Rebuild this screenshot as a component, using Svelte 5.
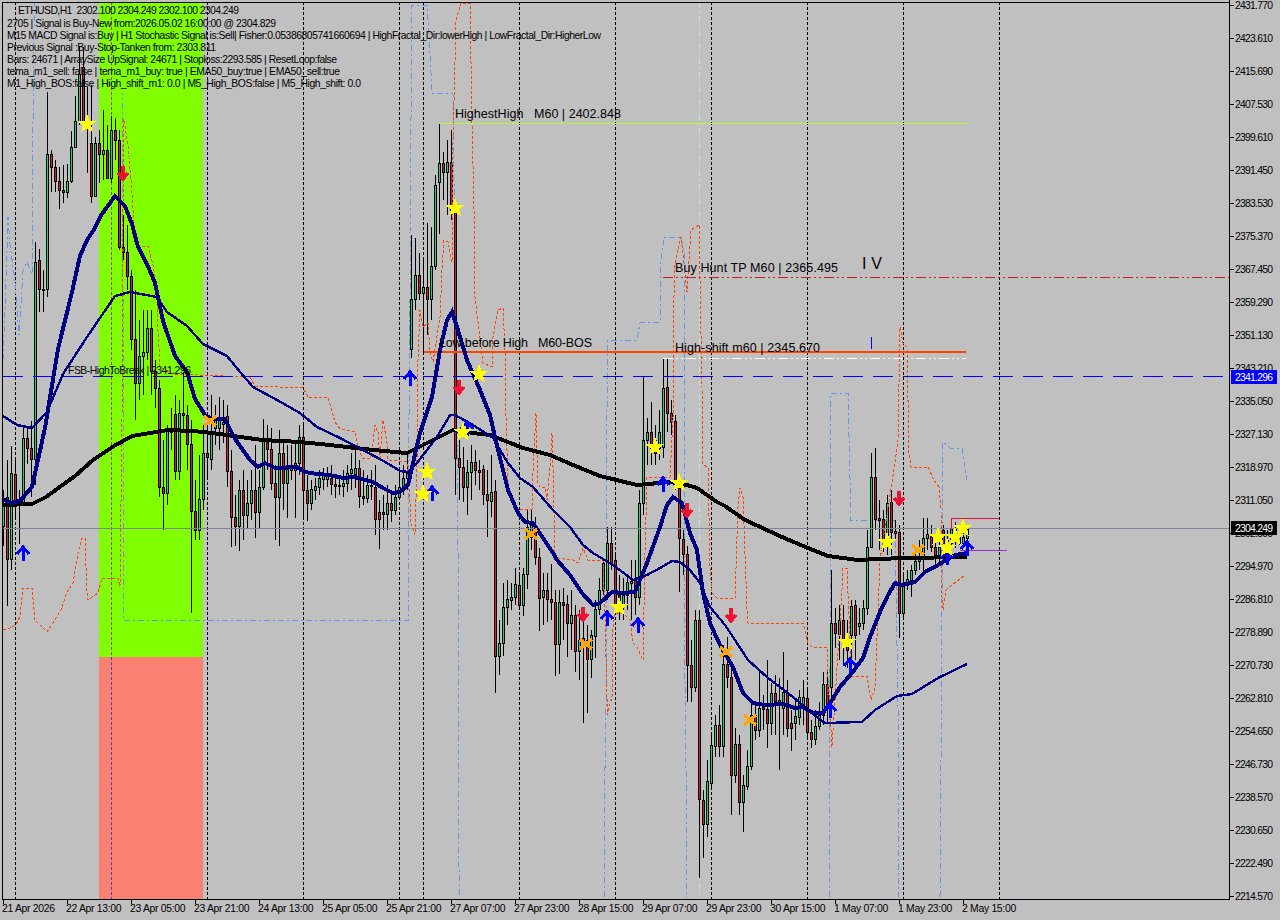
<script lang="ts">
  // ETHUSD H1 chart. All values below are chart pixels, read off the terminal window.
  const W = 1280, H = 920, axisX = 1229, axisY = 899;

  // [bodyTop, bodyBottom, high, low, up]; bar i sits at x = 3 + 4 * i
  const bars: number[][] = [
    [503,526,490,546,1],[497,559,460,606,0],[473,559,446,570,1],[474,505,460,520,0],[503,505,490,544,1],[438,503,428,503,1],
    [438,448,428,464,0],[448,459,421,497,0],[262,459,242,485,1],[260,289,249,312,0],[289,290,270,312,0],[154,289,92,297,1],
    [154,167,150,192,0],[167,181,160,192,0],[181,190,167,209,0],[190,192,165,203,0],[181,192,164,198,1],[147,181,131,183,1],
    [121,147,96,147,1],[74,121,47,125,1],[67,121,47,130,0],[122,126,87,173,0],[143,196,85,203,0],[143,196,137,196,1],
    [143,154,130,183,0],[150,154,110,180,1],[150,178,125,178,0],[130,178,116,183,1],[130,140,118,160,0],[140,247,130,250,0],
    [247,252,215,260,0],[252,276,225,290,0],[276,339,270,350,0],[339,383,290,420,0],[356,383,320,400,1],[352,356,310,395,1],
    [328,352,310,360,1],[328,371,310,395,0],[371,388,360,408,0],[388,487,380,497,0],[487,493,440,530,0],[431,493,425,505,1],
    [430,432,408,450,1],[414,471,395,480,0],[413,471,400,480,1],[413,415,372,430,0],[415,444,405,470,0],[444,511,420,613,0],
    [511,530,480,540,0],[499,530,455,540,1],[453,499,425,510,1],[453,457,420,480,0],[431,459,395,470,1],[420,428,405,445,1],
    [420,428,397,450,1],[422,424,400,443,1],[416,471,405,487,0],[471,517,450,547,0],[517,526,495,546,0],[490,526,480,551,1],
    [490,515,470,540,0],[503,515,480,528,1],[490,503,470,520,1],[490,512,445,538,0],[487,512,470,528,1],[440,487,419,490,1],
    [442,449,425,470,0],[449,483,428,490,0],[483,497,465,540,0],[453,497,430,546,1],[453,483,440,510,0],[469,483,445,518,1],
    [468,470,445,480,1],[463,470,440,518,1],[437,463,425,475,1],[437,490,425,519,0],[490,503,475,521,0],[489,503,480,510,1],
    [486,490,478,500,1],[478,487,470,495,1],[475,479,468,490,1],[475,479,467,487,1],[478,484,465,495,0],[484,486,478,498,0],
    [485,486,478,495,0],[483,486,470,497,1],[473,483,465,492,1],[469,473,453,490,1],[468,474,450,488,1],[468,496,460,508,0],
    [496,498,470,505,0],[485,498,475,503,1],[485,486,470,500,0],[487,519,465,535,0],[512,519,500,549,0],[512,514,495,530,0],
    [503,514,485,530,1],[503,510,490,522,0],[497,510,485,515,1],[487,497,472,498,1],[478,488,465,495,1],[473,478,455,490,1],
    [299,349,235,358,1],[275,299,238,310,1],[275,293,253,300,0],[287,293,260,352,1],[287,299,223,335,0],[266,299,227,320,1],
    [185,266,175,270,1],[163,182,124,234,1],[163,172,152,200,0],[162,172,140,215,1],[162,210,130,220,0],[210,458,205,495,0],
    [458,467,440,500,0],[467,487,447,502,0],[472,487,460,515,1],[462,472,445,500,1],[462,470,450,485,0],[470,472,460,490,0],
    [469,494,465,505,0],[494,500,470,537,0],[492,501,455,517,1],[491,656,480,693,0],[643,656,620,675,1],[607,643,583,656,1],
    [599,607,580,625,1],[597,600,583,610,1],[584,597,568,605,1],[585,605,575,610,0],[574,605,568,616,1],[527,574,510,589,1],
    [525,537,510,550,1],[525,557,517,565,0],[557,598,548,631,0],[590,597,573,625,1],[590,599,573,622,0],[599,602,564,620,0],
    [602,644,590,676,0],[602,644,590,674,1],[602,605,588,640,0],[604,623,595,657,0],[615,623,590,650,1],[615,651,605,672,0],
    [640,651,610,680,1],[638,642,610,723,0],[640,659,625,713,0],[635,659,630,678,1],[609,636,600,658,1],[590,609,578,615,1],
    [563,590,558,595,1],[543,590,527,600,1],[543,563,527,570,0],[560,607,555,615,0],[595,605,575,620,0],[595,604,578,620,1],
    [582,595,575,610,1],[581,583,560,620,1],[580,597,560,615,0],[503,597,490,605,1],[440,503,377,515,1],[432,440,418,465,1],
    [432,448,402,465,0],[440,453,425,465,0],[432,448,410,460,1],[388,447,358,458,1],[387,413,358,432,0],[413,422,400,435,0],
    [421,482,415,490,0],[488,538,475,592,0],[539,554,530,575,0],[554,665,546,702,0],[665,687,640,702,0],[620,687,610,692,1],
    [620,799,610,878,0],[800,824,790,858,0],[781,824,760,837,1],[745,783,732,790,1],[725,746,715,757,1],[725,746,705,757,0],
    [664,746,645,757,1],[664,677,637,688,0],[677,775,666,815,0],[744,775,728,783,1],[744,802,735,815,0],[785,802,775,832,1],
    [766,786,750,790,1],[715,766,700,770,1],[715,730,705,740,0],[708,730,670,737,1],[707,709,695,730,0],[709,723,660,748,0],
    [693,723,683,735,1],[693,701,675,735,0],[700,703,678,770,0],[692,708,652,735,1],[692,728,680,737,0],[723,728,710,751,0],
    [716,723,700,740,1],[697,717,690,725,1],[697,707,680,725,1],[698,732,690,740,0],[732,739,720,748,0],[726,739,710,745,1],
    [715,726,702,730,1],[684,715,672,725,1],[684,707,670,722,0],[623,687,570,717,1],[623,633,608,648,0],[620,634,605,660,1],
    [620,640,605,665,0],[638,650,620,668,0],[606,635,600,672,1],[605,635,600,660,0],[623,626,608,635,1],[608,623,600,630,1],
    [547,608,530,615,1],[477,547,453,548,1],[477,519,448,530,0],[518,520,500,550,0],[519,540,510,552,0],[503,540,495,555,1],
    [502,532,490,555,0],[531,533,520,540,0],[532,613,525,638,0],[583,613,575,617,1],[579,583,570,590,1],[570,580,565,597,1],
    [561,570,550,575,1],[557,561,540,570,1],[538,557,518,572,1],[534,538,518,550,1],[535,547,525,552,0],[547,555,540,565,0],
    [547,555,538,562,1],[530,543,525,556,0],[540,550,530,556,1],[529,543,518,545,1],[528,540,522,548,0],[537,543,525,545,1],
    [537,543,526,548,1],[529,538,525,540,1]
  ];

  const fastLine = "3,499 10,503 20,501 32,487 45,428 58,349 72,292 80,256 87,240 93,231 102,214 115,196 125,206 132,224 138,247 147,264 155,283 163,321 175,356 187,372 195,399 205,415 213,419 225,419 235,439 250,460 258,467 265,463 275,468 297,467 305,472 317,474 330,475 343,478 355,477 365,480 373,482 383,488 393,493 400,492 408,485 413,463 420,433 432,397 440,350 447,320 452,312 457,327 467,360 480,390 490,415 498,450 508,490 518,513 525,522 533,523 543,538 553,553 557,560 570,575 582,593 593,605 600,603 612,592 623,593 635,592 647,563 660,527 667,505 673,497 682,503 690,533 697,550 703,593 710,623 720,645 733,667 743,693 753,703 765,705 783,704 795,708 803,707 813,713 823,713 832,700 840,687 852,673 863,658 870,637 880,612 888,595 895,583 902,585 915,582 925,572 938,565 955,555 967,553";
  const midLine = "3,416 17,425 32,428 47,412 63,374 87,337 115,296 130,292 157,297 167,312 187,326 203,344 227,356 240,372 253,387 277,400 300,413 317,427 340,438 363,450 387,463 400,471 408,472 417,463 437,437 450,415 455,415 473,425 493,438 508,463 520,478 533,487 553,510 570,527 583,545 593,553 613,565 633,580 647,575 660,568 672,561 680,562 690,570 700,583 710,607 725,625 735,640 748,660 768,678 788,693 805,707 818,718 825,723 862,722 875,710 897,696 912,694 938,678 967,664";
  const slowLine = "3,505 32,504 46,497 75,476 93,460 114,446 132,436 168,430 193,431 221,434 240,437 263,440 300,442 330,445 373,450 407,453 417,448 433,440 453,430 473,433 490,435 523,448 550,455 573,465 600,476 637,485 670,482 687,485 697,488 717,502 725,506 745,520 782,537 808,548 828,556 858,560 902,558 967,557";
  const orangeBand = "3,629 8,629 16,625 18,620 20,617 23,588 32,588 35,620 47,632 55,620 61,610 67,592 73,583 78,553 82,538 85,538 87,593 88,600 98,593 102,578 118,578 120,587 122,417 123,203 124,119 128,146 131,180 135,237 138,246 148,246 153,265 157,289 158,331 160,367 173,374 250,377 255,386 303,388 308,397 328,397 335,422 340,429 355,432 357,443 362,458 370,458 373,443 375,425 378,432 380,458 383,420 387,443 388,460 407,462 410,503 411,523 415,535 417,460 418,360 420,310 423,327 428,323 430,353 433,362 440,317 442,270 444,240 448,242 452,262 453,143 456,20 461,3 470,3 472,123 474,210 475,297 483,363 492,367 493,337 498,310 503,308 505,350 506,417 508,483 512,503 520,509 532,509 533,473 536,413 538,483 540,487 545,487 547,500 550,467 552,433 553,467 555,558 573,560 578,563 583,548 588,560 603,560 605,617 607,697 607,715 612,697 613,627 615,613 623,613 630,620 633,643 637,647 643,660 645,553 647,477 670,477 673,417 673,330 675,263 681,237 687,292 691,230 699,225 702,387 703,465 708,467 710,567 712,593 717,598 735,599 738,507 740,488 743,497 747,610 748,623 803,623 808,643 812,647 827,647 828,677 832,747 835,700 842,590 843,568 847,568 850,640 851,676 867,676 871,700 875,688 878,612 880,560 895,463 898,440 900,327 903,343 907,347 909,453 911,467 928,467 934,480 939,487 941,510 942,597 943,610 946,590 952,585 965,575";
  const blueBand = "3,360 5,310 8,217 10,245 15,281 19,335 23,271 27,262 32,274 33,121 34,30 34,2 M122,89 123,292 123,620 408,621 408,533 410,300 410,233 412,5 427,5 429,33 432,93 453,93 455,267 457,443 458,550 459,870 460,898 M604,897 604,830 606,707 607,410 608,340 637,340 640,323 660,322 660,270 664,237 681,237 684,253 684,587 687,860 686,898 M829,897 829,790 830,673 831,393 848,393 851,520 895,520 898,707 898,837 899,897 M940,897 941,760 942,600 943,442 950,448 962,448 967,480";
  const blueSegments = blueBand.split(" M");

  const gridX = [15, 207, 303, 399, 423, 519, 615, 711, 807, 903, 999];

  const timeLabels = ["21 Apr 2026", "22 Apr 13:00", "23 Apr 05:00", "23 Apr 21:00", "24 Apr 13:00", "25 Apr 05:00", "25 Apr 21:00", "27 Apr 07:00", "27 Apr 23:00", "28 Apr 15:00", "29 Apr 07:00", "29 Apr 23:00", "30 Apr 15:00", "1 May 07:00", "1 May 23:00", "2 May 15:00"];
  const prices = ["2431.770", "2423.610", "2415.690", "2407.530", "2399.610", "2391.450", "2383.530", "2375.370", "2367.450", "2359.290", "2351.130", "2343.210", "2335.050", "2327.130", "2318.970", "2311.050", "2302.890", "2294.970", "2286.810", "2278.890", "2270.730", "2262.810", "2254.650", "2246.730", "2238.570", "2230.650", "2222.490", "2214.570"];

  const info = [
    { x: 18, y: 14, w: 221, t: "ETHUSD,H1  2302.100 2304.249 2302.100 2304.249" },
    { x: 7, y: 27, w: 269, t: "2705 | Signal is Buy-New from:2026.05.02 16:00:00 @ 2304.829" },
    { x: 7, y: 39, w: 594, t: "M15 MACD Signal is:Buy | H1 Stochastic Signal is:Sell| Fisher:0.05386805741660694 | HighFractal_Dir:lowerHigh | LowFractal_Dir:HigherLow" },
    { x: 7, y: 51, w: 209, t: "Previous Signal :Buy-Stop-Tanken from: 2303.811" },
    { x: 7, y: 63, w: 330, t: "Bars: 24671 | ArraySize UpSignal: 24671 | Stoploss:2293.585 | ResetLoop:false" },
    { x: 7, y: 75, w: 333, t: "tema_m1_sell: false | tema_m1_buy: true | EMA50_buy:true | EMA50_sell:true" },
    { x: 7, y: 87, w: 354, t: "M1_High_BOS:false | High_shift_m1: 0.0 | M5_High_BOS:false | M5_High_shift: 0.0" }
  ];
  const notes = [
    { x: 455, y: 118, w: 166, t: "HighestHigh   M60 | 2402.848" },
    { x: 675, y: 272, w: 163, t: "Buy Hunt TP M60 | 2365.495" },
    { x: 675, y: 352, w: 145, t: "High-shift m60 | 2345.670" },
    { x: 439, y: 347, w: 153, t: "Low before High   M60-BOS" }
  ];

  const stars = [[87,124],[455,208],[479,374],[463,432],[427,472],[423,494],[655,447],[679,483],[619,607],[847,642],[887,542],[938,537],[955,537],[947,548],[963,528]];
  const upArrows = [[23,553],[410,378],[432,493],[467,428],[663,484],[607,618],[638,625],[830,710],[850,665],[947,557],[967,548]];
  const downArrows = [[123,173],[459,387],[583,614],[687,510],[731,615],[899,498]];
  const crosses = [[210,421],[531,534],[586,644],[726,652],[750,720],[918,550]];

  function starPoints(cx: number, cy: number, r = 10) {
    const pts: string[] = [];
    for (let k = 0; k < 10; k++) {
      const rad = k % 2 ? r * 0.42 : r;
      const a = -Math.PI / 2 + (k * Math.PI) / 5;
      pts.push(`${(cx + rad * Math.cos(a)).toFixed(1)},${(cy + rad * Math.sin(a)).toFixed(1)}`);
    }
    return pts.join(" ");
  }
</script>

<div class="terminal">
  <svg class="chart" viewBox="0 0 {W} {H}" width={W} height={H}>
    <rect class="zone-green" x="99" y="2" width="104" height="655" />
    <rect class="zone-red" x="99" y="657" width="104" height={axisY - 657} />

    {#each gridX as x}
      <line class="grid" x1={x + 0.5} y1="2" x2={x + 0.5} y2={axisY} />
    {/each}
    <line class="grid-green" x1="111.5" y1="2" x2="111.5" y2="657" />
    <line class="grid-red" x1="111.5" y1="657" x2="111.5" y2={axisY} />

    <line class="pale" x1="699.5" y1="2" x2="699.5" y2={axisY} />
    {#each blueSegments as seg}
      <polyline class="blue-band" points={seg} />
    {/each}

    {#each bars as b, i}
      <rect class="wick" x={3 + 4 * i} y={Math.min(b[2], b[0])} width="1" height={Math.max(b[3], b[1]) - Math.min(b[2], b[0])} />
      <rect class="wick" x={2 + 4 * i} y={b[0]} width="3" height={b[1] - b[0] + 1} />
      {#if b[1] - b[0] > 1}
        <rect class="body" class:up={b[4] === 1} x={3 + 4 * i} y={b[0] + 1} width="1" height={b[1] - b[0] - 1} />
      {/if}
    {/each}

    <polyline class="orange-band" points={orangeBand} />

    <line class="level-blue" x1="3" y1="376.5" x2={axisX} y2="376.5" />
    <line class="level-last" x1="3" y1="528.5" x2={axisX} y2="528.5" />
    <line class="level-high" x1="440" y1="123.5" x2="967" y2="123.5" />
    <line class="level-low" x1="424" y1="352" x2="966" y2="352" />
    <line class="level-white" x1="663" y1="358.5" x2="966" y2="358.5" />
    <line class="level-tp" x1="663" y1="277.5" x2={axisX} y2="277.5" />
    <polyline class="level-stop" points="951.5,530 951.5,518.5 999,518.5" />
    <line class="level-entry" x1="960" y1="550.5" x2="1007" y2="550.5" />
    <line class="tick-blue" x1="871.5" y1="337" x2="871.5" y2="349" />

    <polyline class="ma-slow" points={slowLine} />
    <polyline class="ma-mid" points={midLine} />
    <polyline class="ma-fast" points={fastLine} />

    {#each crosses as [x, y]}
      <path class="cross" d="M{x - 6} {y - 5}L{x + 6} {y + 5}M{x + 6} {y - 5}L{x - 6} {y + 5}" />
    {/each}
    {#each upArrows as [x, y]}
      <path class="arrow-up" d="M{x} {y + 8}V{y - 6}M{x - 6} {y + 1}L{x} {y - 6}L{x + 6} {y + 1}" />
    {/each}
    {#each downArrows as [x, y]}
      <path class="arrow-down" d="M{x} {y - 7}V{y + 6}M{x - 5} {y}L{x} {y + 6}L{x + 5} {y}" />
    {/each}
    {#each stars as [x, y]}
      <polygon class="star" points={starPoints(x, y)} />
    {/each}

    <text class="small" x="68" y="374" textLength="123">FSB-HighToBreak | 2341.296</text>
    {#each notes as n}
      <text class="note" x={n.x} y={n.y} textLength={n.w} xml:space="preserve">{n.t}</text>
    {/each}
    <text class="glyphs" x="862" y="269" textLength="20" xml:space="preserve">I V</text>
    {#each info as line}
      <text class="small" x={line.x} y={line.y} textLength={line.w} xml:space="preserve">{line.t}</text>
    {/each}

    <line class="axis" x1="2.5" y1="2" x2="2.5" y2={axisY} />
    <line class="axis" x1="2" y1="2.5" x2={axisX} y2="2.5" />
    <line class="axis" x1={axisX + 0.5} y1="0" x2={axisX + 0.5} y2={axisY} />
    <line class="axis" x1="2" y1={axisY + 0.5} x2={axisX + 1} y2={axisY + 0.5} />

    {#each timeLabels as label, i}
      <line class="axis" x1={3.5 + 64 * i} y1={axisY} x2={3.5 + 64 * i} y2={axisY + 5} />
      <text class="small time" x={2 + 64 * i} y="912">{label}</text>
    {/each}
    {#each prices as p, i}
      <line class="axis" x1={axisX} y1={5.5 + 33 * i} x2={axisX + 5} y2={5.5 + 33 * i} />
      <text class="price" x="1235" y={9 + 33 * i} textLength="38">{p}</text>
    {/each}

    <rect class="tag-blue" x="1231" y="370" width="46" height="14" />
    <text class="price tag-text" x="1235" y="381" textLength="38">2341.296</text>
    <rect class="tag-black" x="1231" y="521" width="46" height="14" />
    <text class="price tag-text" x="1235" y="532" textLength="38">2304.249</text>
  </svg>
</div>

<style>
  :global(body) {
    margin: 0;
    background: #c0c0c0;
  }
  .terminal {
    width: 1280px;
    height: 920px;
    overflow: hidden;
    background: #c0c0c0;
  }
  .chart {
    display: block;
    shape-rendering: crispEdges;
  }
  polyline,
  line {
    fill: none;
  }
  text {
    font-family: "Liberation Sans", Arial, sans-serif;
    fill: #000;
    shape-rendering: auto;
  }
  .small,
  .price {
    font-size: 10.4px;
  }
  .time {
    letter-spacing: -0.3px;
  }
  .note {
    font-size: 12.5px;
  }
  .glyphs {
    font-size: 16px;
  }
  .zone-green { fill: #7fff00; }
  .zone-red { fill: #fa8072; }
  .grid { stroke: #000; stroke-dasharray: 3 2; }
  .grid-green { stroke: #b030b0; stroke-dasharray: 3 2; }
  .grid-red { stroke: #4040c8; stroke-dasharray: 3 2; }
  .pale { stroke: #b8e4ea; stroke-dasharray: 6 3 2 3; }
  .blue-band { stroke: #6495ed; stroke-dasharray: 6 3 2 3; }
  .orange-band { stroke: #ff4500; stroke-dasharray: 3 2; }
  .wick { fill: #000; }
  .body { fill: #dc143c; }
  .body.up { fill: #00e07a; }
  .level-blue { stroke: #0000ff; stroke-dasharray: 20 10; }
  .level-last { stroke: #778899; }
  .level-high { stroke: #adff2f; }
  .level-low { stroke: #ff4500; stroke-width: 2; }
  .level-white { stroke: #fff; stroke-dasharray: 10 3 2 3 2 3; }
  .level-tp { stroke: #c81e1e; stroke-dasharray: 10 3 2 3 2 3; }
  .level-stop { stroke: #dc143c; }
  .level-entry { stroke: #9932cc; }
  .tick-blue { stroke: #0000ff; }
  .ma-slow { stroke: #000; stroke-width: 4; }
  .ma-mid { stroke: #000080; stroke-width: 2.4; }
  .ma-fast { stroke: #000080; stroke-width: 4; }
  .cross { stroke: #ffa500; stroke-width: 3.4; fill: none; }
  .arrow-up { stroke: #0000ff; stroke-width: 3; fill: none; }
  .arrow-down { stroke: #f01030; stroke-width: 3.4; fill: none; }
  .star { fill: #ffff00; }
  .axis { stroke: #000; }
  .tag-blue { fill: #0000ff; }
  .tag-black { fill: #000; }
  .tag-text { fill: #fff; }
</style>
